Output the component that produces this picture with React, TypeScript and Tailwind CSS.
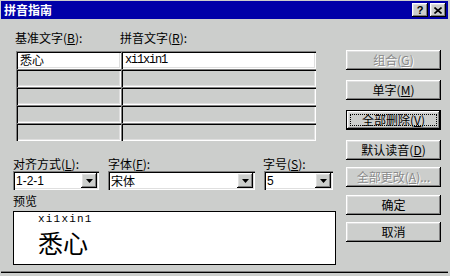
import type { ReactNode } from "react";

const raised =
  "shadow-[inset_-1px_-1px_0_#000000,inset_1px_1px_0_#ffffff,inset_-2px_-2px_0_#808080,inset_2px_2px_0_#dfdfdf]";
const sunken =
  "shadow-[inset_1px_1px_0_#808080,inset_2px_2px_0_#000000,inset_-1px_-1px_0_#ffffff,inset_-2px_-2px_0_#dfdfdf]";

function Key({ k }: { k: string }) {
  return (
    <>
      (<u>{k}</u>)
    </>
  );
}

function Btn({ children, disabled, focused, className = "" }: { children: ReactNode; disabled?: boolean; focused?: boolean; className?: string }) {
  if (focused) {
    return (
      <div className={`h-[20px] w-[95px] border border-black ${className}`}>
        <div className={`flex h-full w-full p-[3px] ${raised} bg-[#cccecc]`}>
          <div className="flex flex-1 items-center justify-center border border-dotted border-black">{children}</div>
        </div>
      </div>
    );
  }
  return (
    <div
      className={`flex h-[20px] w-[95px] items-center justify-center bg-[#cccecc] ${raised} ${
        disabled ? "text-[#8a8a8a] [text-shadow:1px_1px_0_#ffffff]" : "text-black"
      } ${className}`}
    >
      {children}
    </div>
  );
}

function Combo({ value, w, mono }: { value: string; w: string; mono?: boolean }) {
  return (
    <div className={`flex h-[19px] items-center bg-white ${sunken} ${w}`}>
      <span className={`pl-[3px] ${mono ? "font-['Liberation_Sans',sans-serif]" : ""}`}>{value}</span>
      <div className={`ml-auto mr-[2px] flex h-[15px] w-[16px] items-center justify-center bg-[#cccecc] ${raised}`}>
        <svg width="7" height="4" viewBox="0 0 7 4">
          <polygon points="0,0 7,0 3.5,4" fill="#000" />
        </svg>
      </div>
    </div>
  );
}

export default function App() {
  const rows = [0, 1, 2, 3, 4];
  return (
    <div className="flex h-[276px] w-[450px] flex-col overflow-hidden bg-[#cccecc] pl-[1px] pr-[2px] pt-[1px] font-['Noto_Sans_CJK_SC',sans-serif] text-[12px] leading-[14px] text-black">
      {/* title bar */}
      <div className="flex h-[18px] items-center bg-[#0000a8] pl-[3px] pr-[2px]">
        <span className="font-bold text-white">拼音指南</span>
        <div className="ml-auto flex gap-[2px]">
          <div className={`flex h-[14px] w-[16px] items-center justify-center bg-[#cccecc] text-[11px] font-bold ${raised} font-['Liberation_Sans',sans-serif]`}>?</div>
          <div className={`flex h-[14px] w-[16px] items-center justify-center bg-[#cccecc] ${raised}`}>
            <svg width="8" height="7" viewBox="0 0 8 7">
              <path d="M0.5 0.5 L7.5 6.5 M7.5 0.5 L0.5 6.5" stroke="#000" strokeWidth="1.6" />
            </svg>
          </div>
        </div>
      </div>

      {/* body */}
      <div className="flex h-[252px] pl-[12px]">
        <div className="flex w-[323px] flex-col">
          <div className="mt-[12px] flex h-[14px]">
            <span className="w-[107px] pl-[2px]">
              基准文字<Key k="B" />:
            </span>
            <span>
              拼音文字<Key k="R" />:
            </span>
          </div>

          <div className="ml-[3px] mt-[6px] flex w-[300px] flex-col">
            {rows.map((r) => (
              <div key={r} className="flex h-[18px]">
                <div className={`flex w-[105px] items-center pl-[4px] ${sunken} ${r === 0 ? "bg-white" : "bg-[#cccecc]"}`}>
                  {r === 0 ? "悉心" : ""}
                </div>
                <div className={`flex flex-1 items-center pl-[4px] ${sunken} ${r === 0 ? "bg-white" : "bg-[#cccecc]"}`}>
                  {r === 0 ? <span className="font-['Liberation_Mono',monospace] tracking-[-1.2px]">xi1xin1</span> : ""}
                </div>
              </div>
            ))}
          </div>

          <div className="mt-[16px] flex h-[14px]">
            <span className="w-[95px]">
              对齐方式<Key k="L" />:
            </span>
            <span className="w-[155px]">
              字体<Key k="F" />:
            </span>
            <span>
              字号<Key k="S" />:
            </span>
          </div>

          <div className="flex gap-[9px]">
            <Combo value="1-2-1" w="w-[86px]" mono />
            <Combo value="宋体" w="w-[147px]" />
            <Combo value="5" w="w-[69px]" mono />
          </div>

          <div className="mt-[4px] h-[14px]">预览</div>

          <div className="mt-[3px] flex h-[54px] flex-col border border-black bg-white pl-[24px] pt-[1px]">
            <span className="font-['Liberation_Mono',monospace] text-[11px] leading-[12px] tracking-[1.2px]">xi1xin1</span>
            <span className="text-[25px] leading-[34px]">悉心</span>
          </div>
        </div>

        <div className="ml-[10px] flex w-[95px] flex-col">
          <Btn disabled className="mt-[31px]">
            组合<Key k="G" />
          </Btn>
          <Btn className="mt-[10px]">
            单字<Key k="M" />
          </Btn>
          <Btn focused className="mt-[10px]">
            全部删除<Key k="V" />
          </Btn>
          <Btn className="mt-[10px]">
            默认读音<Key k="D" />
          </Btn>
          <Btn disabled className="mt-[7px]">
            全部更改<Key k="A" />...
          </Btn>
          <Btn className="mt-[8px]">确定</Btn>
          <Btn className="mt-[7px]">取消</Btn>
        </div>
      </div>

      <div className="h-[1px] bg-[#808080]" />
      <div className="h-[1px] bg-black" />
    </div>
  );
}
